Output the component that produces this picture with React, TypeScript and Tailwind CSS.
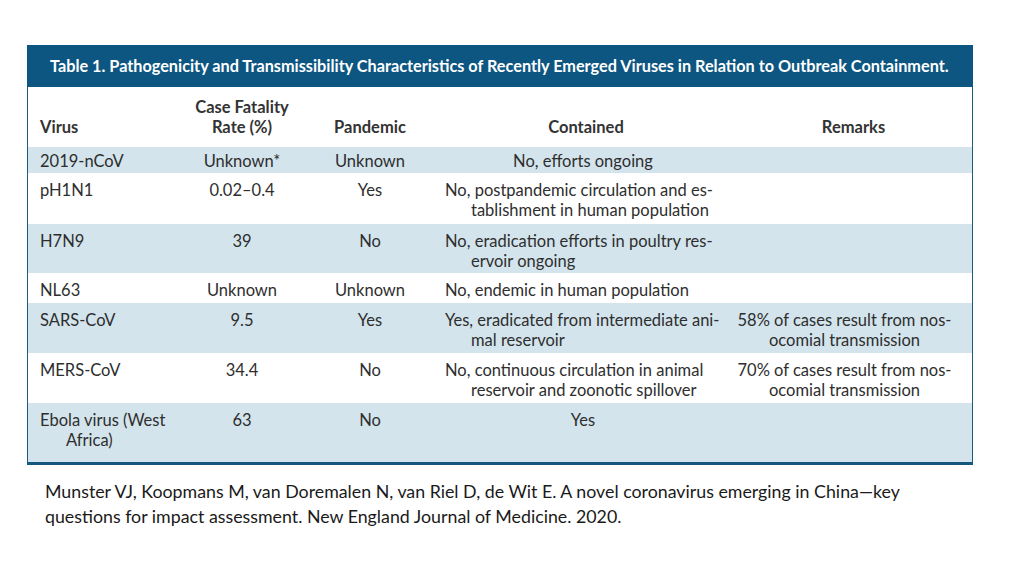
import React from "react";

type Row = {
  virus: React.ReactNode;
  cfr: string;
  pandemic: string;
  contained: React.ReactNode;
  containedCenter?: boolean;
  remarks?: React.ReactNode;
  h: string;
  pt: string;
  shaded: boolean;
};

function Hang({ first, rest }: { first: string; rest: string }) {
  return (
    <div>
      <div>{first}</div>
      <div className="pl-[26px]">{rest}</div>
    </div>
  );
}

const rows: Row[] = [
  { virus: "2019-nCoV", cfr: "Unknown*", pandemic: "Unknown", contained: "No, efforts ongoing", containedCenter: true, h: "h-[26px]", pt: "pt-[4px]", shaded: true },
  { virus: "pH1N1", cfr: "0.02–0.4", pandemic: "Yes", contained: <Hang first="No, postpandemic circulation and es-" rest="tablishment in human population" />, h: "h-[51px]", pt: "pt-[7px]", shaded: false },
  { virus: "H7N9", cfr: "39", pandemic: "No", contained: <Hang first="No, eradication efforts in poultry res-" rest="ervoir ongoing" />, h: "h-[49px]", pt: "pt-[7px]", shaded: true },
  { virus: "NL63", cfr: "Unknown", pandemic: "Unknown", contained: "No, endemic in human population", h: "h-[30px]", pt: "pt-[7px]", shaded: false },
  {
    virus: "SARS-CoV", cfr: "9.5", pandemic: "Yes",
    contained: <Hang first="Yes, eradicated from intermediate ani-" rest="mal reservoir" />,
    remarks: <><div>58% of cases result from nos-</div><div>ocomial transmission</div></>,
    h: "h-[50px]", pt: "pt-[7px]", shaded: true,
  },
  {
    virus: "MERS-CoV", cfr: "34.4", pandemic: "No",
    contained: <Hang first="No, continuous circulation in animal" rest="reservoir and zoonotic spillover" />,
    remarks: <><div>70% of cases result from nos-</div><div>ocomial transmission</div></>,
    h: "h-[50px]", pt: "pt-[7px]", shaded: false,
  },
  { virus: <Hang first="Ebola virus (West" rest="Africa)" />, cfr: "63", pandemic: "No", contained: "Yes", containedCenter: true, h: "h-[59px]", pt: "pt-[7px]", shaded: true },
];

const cols = "grid grid-cols-[153px_122px_134px_292px_1fr]";

export default function App() {
  return (
    <div className="w-[1024px] h-[576px] bg-white relative overflow-hidden">
      <div className="pt-[45px] pl-[27px]">
        <div className="w-[946px] border-x border-[#1d5c82] border-b-[3px] border-b-[#15587f] text-[#2e2e2e] text-[16.5px] leading-[20px] font-['Lato',sans-serif]">
          <div className="h-[42px] -mx-px bg-[#0d5681] text-white font-bold text-[16.25px] flex items-center pl-[23px] whitespace-nowrap">
            Table 1. Pathogenicity and Transmissibility Characteristics of Recently Emerged Viruses in Relation to Outbreak Containment.
          </div>
          <div className={`${cols} h-[60px] items-end pb-[10px] font-bold text-[#333]`}>
            <div className="pl-[12px]">Virus</div>
            <div className="text-center">
              <div>Case Fatality</div>
              <div>Rate (%)</div>
            </div>
            <div className="text-center">Pandemic</div>
            <div className="text-center pl-[6px]">Contained</div>
            <div className="text-center pl-[6px]">Remarks</div>
          </div>
          {rows.map((r, i) => (
            <div key={i} className={`${cols} ${r.h} ${r.pt} ${r.shaded ? "bg-[#d3e4ec]" : "bg-white"} whitespace-nowrap`}>
              <div className="pl-[12px]">{r.virus}</div>
              <div className="text-center">{r.cfr}</div>
              <div className="text-center">{r.pandemic}</div>
              <div className={r.containedCenter ? "text-center" : "pl-[8px]"}>{r.contained}</div>
              <div className="text-center pr-[12px]">{r.remarks}</div>
            </div>
          ))}
        </div>
      </div>
      <div className="pl-[45px] pt-[14px] text-[17.8px] leading-[25px] text-[#1a1a1a] font-['Lato',sans-serif] whitespace-nowrap">
        <div>Munster VJ, Koopmans M, van Doremalen N, van Riel D, de Wit E. A novel coronavirus emerging in China—key</div>
        <div>questions for impact assessment. New England Journal of Medicine. 2020.</div>
      </div>
    </div>
  );
}
